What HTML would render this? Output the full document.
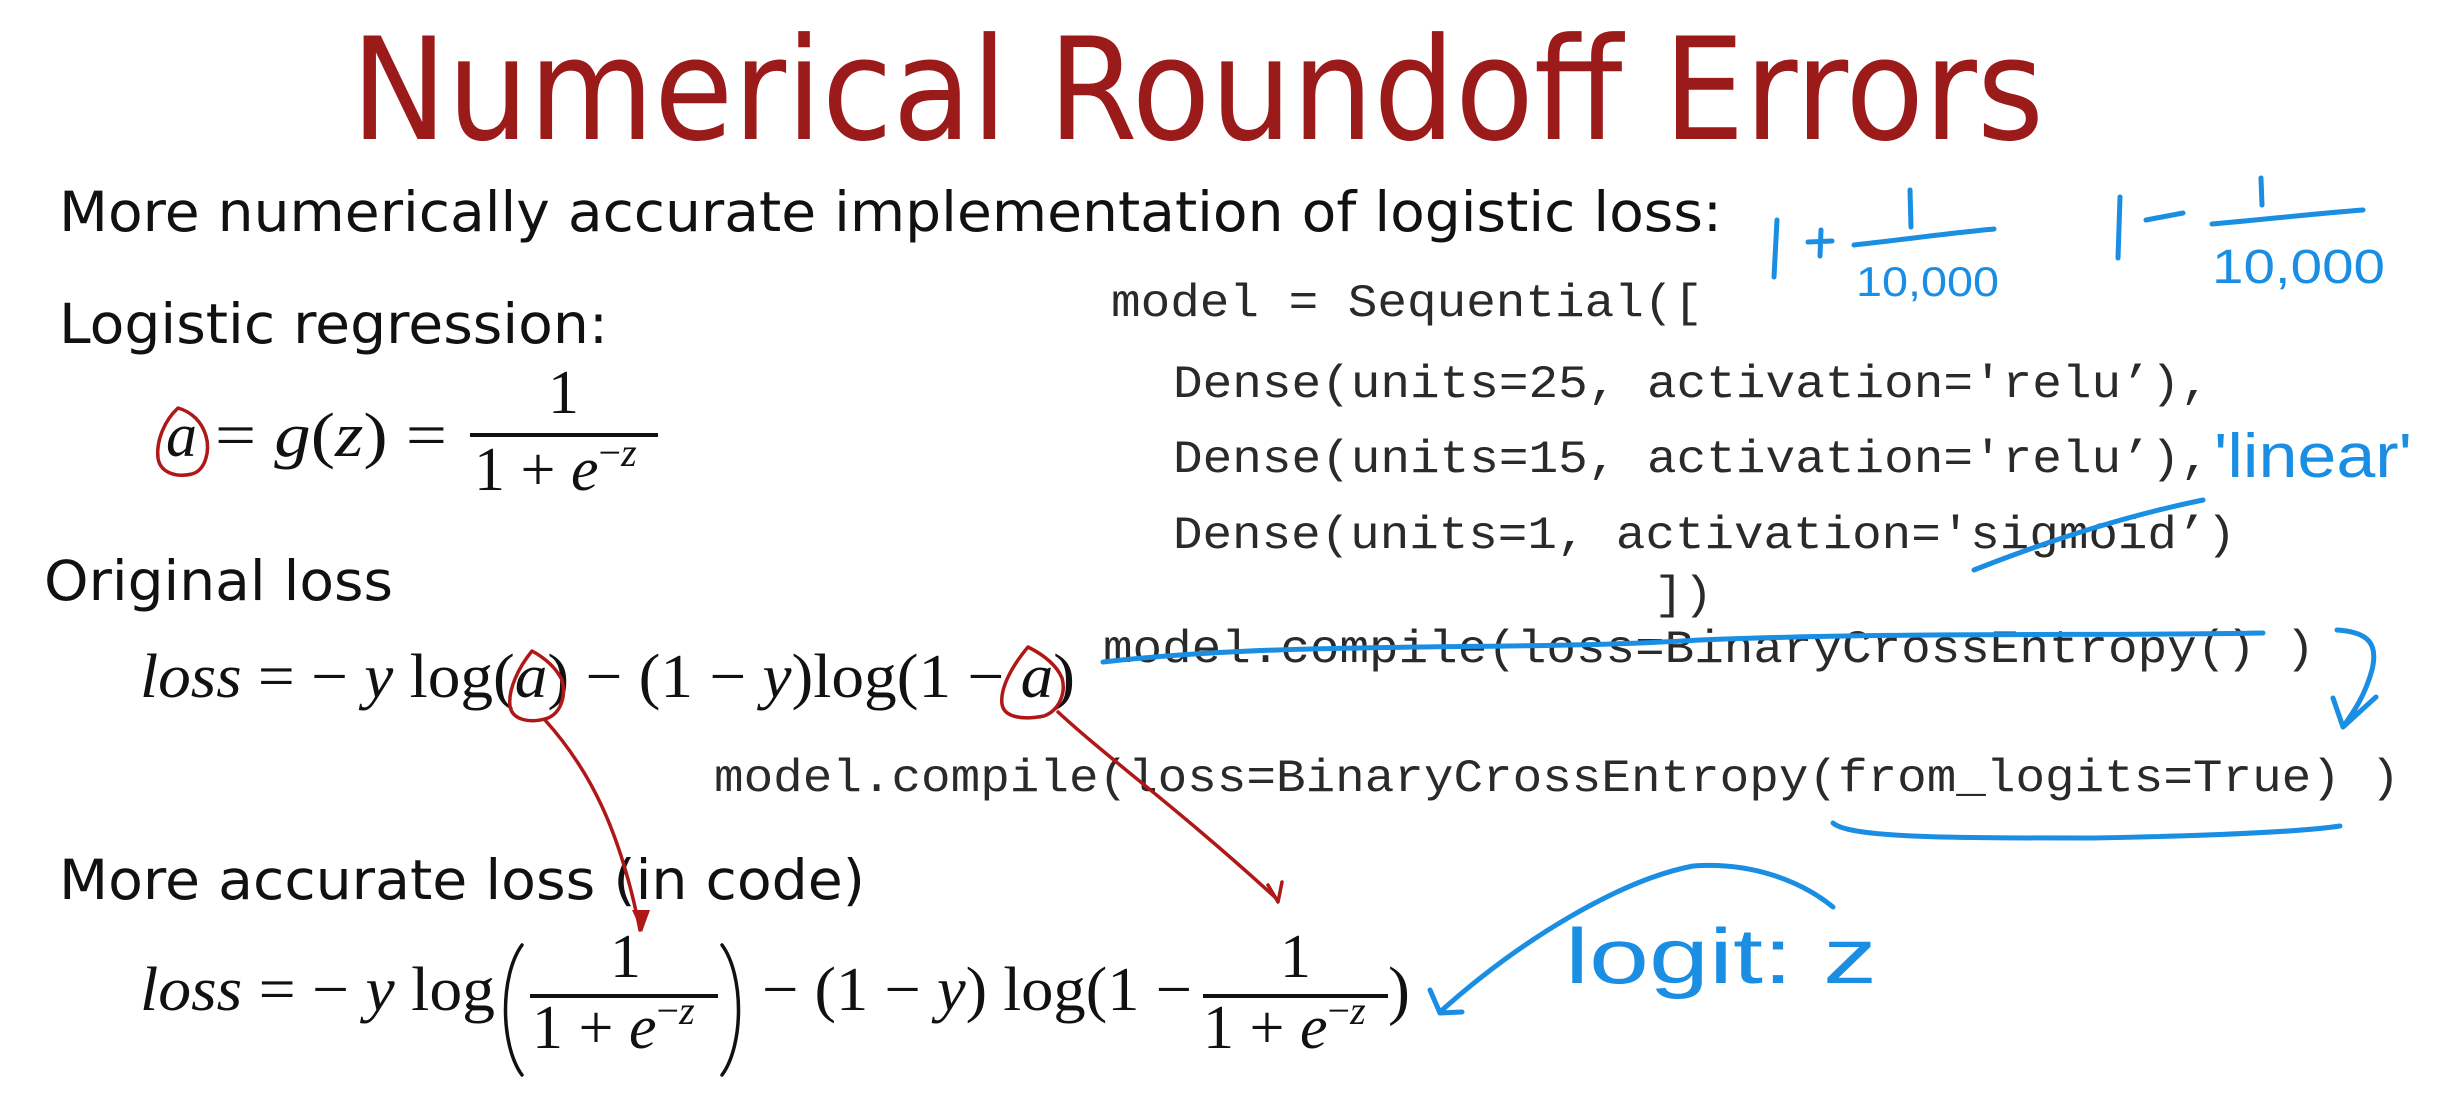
<!DOCTYPE html>
<html><head><meta charset="utf-8"><style>
html,body{margin:0;padding:0;background:#fff;}
svg{display:block;}
.s{font-family:"DejaVu Sans","Liberation Sans",sans-serif;fill:#111;}
.m{font-family:"Liberation Serif",serif;fill:#111;}
.c{font-family:"Liberation Mono",monospace;fill:#2a2a2a;}
.h{font-family:"Liberation Sans",sans-serif;fill:#1a8ee3;}
.b{fill:none;stroke:#1a8ee3;stroke-width:5;stroke-linecap:round;stroke-linejoin:round;}
.r{fill:none;stroke:#b01818;stroke-width:3.5;stroke-linecap:round;stroke-linejoin:round;}
.p{fill:none;stroke:#111;stroke-width:3.5;stroke-linecap:round;}
</style></head><body>
<svg width="2443" height="1120" viewBox="0 0 2443 1120" xmlns="http://www.w3.org/2000/svg">
<rect width="2443" height="1120" fill="#fff"/>
<text x="351" y="139" font-size="142" fill="#9b1a1a" font-family="DejaVu Sans, Liberation Sans, sans-serif" textLength="1693" lengthAdjust="spacingAndGlyphs">Numerical Roundoff Errors</text>

<text class="s" x="59" y="231" font-size="55" textLength="1663" lengthAdjust="spacingAndGlyphs">More numerically accurate implementation of logistic loss:</text>
<text class="s" x="59" y="343" font-size="55" textLength="549" lengthAdjust="spacingAndGlyphs">Logistic regression:</text>
<text class="s" x="44" y="600" font-size="55" textLength="349" lengthAdjust="spacingAndGlyphs">Original loss</text>
<text class="s" x="59" y="899" font-size="55" textLength="806" lengthAdjust="spacingAndGlyphs">More accurate loss (in code)</text>

<text class="m" x="166" y="456" font-size="62" font-style="italic">a</text>
<text class="m" x="215" y="456" font-size="62" textLength="232" lengthAdjust="spacingAndGlyphs">= <tspan font-style="italic">g</tspan>(<tspan font-style="italic">z</tspan>) =</text>
<text class="m" x="548" y="413" font-size="62">1</text>
<rect x="470" y="433" width="188" height="4" fill="#111"/>
<text class="m" x="474" y="490" font-size="62">1 + <tspan font-style="italic">e</tspan><tspan font-size="40" dy="-24">−<tspan font-style="italic">z</tspan></tspan></text>

<text class="m" x="140" y="697" font-size="62" textLength="935" lengthAdjust="spacingAndGlyphs"><tspan font-style="italic">loss</tspan> = − <tspan font-style="italic">y</tspan> log(<tspan font-style="italic">a</tspan>) − (1 − <tspan font-style="italic">y</tspan>)log(1 − <tspan font-style="italic">a</tspan>)</text>

<text class="m" x="140" y="1010" font-size="62" textLength="355" lengthAdjust="spacingAndGlyphs"><tspan font-style="italic">loss</tspan> = − <tspan font-style="italic">y</tspan> log</text>
<path class="p" d="M522 945 C500 975 500 1045 522 1075"/>
<text class="m" x="610" y="977" font-size="62">1</text>
<rect x="530" y="994" width="188" height="4" fill="#111"/>
<text class="m" x="532" y="1048" font-size="62">1 + <tspan font-style="italic">e</tspan><tspan font-size="40" dy="-24">−<tspan font-style="italic">z</tspan></tspan></text>
<path class="p" d="M722 945 C744 975 744 1045 722 1075"/>
<text class="m" x="762" y="1010" font-size="62" textLength="430" lengthAdjust="spacingAndGlyphs">− (1 − <tspan font-style="italic">y</tspan>) log(1 −</text>
<text class="m" x="1280" y="977" font-size="62">1</text>
<rect x="1203" y="994" width="185" height="4" fill="#111"/>
<text class="m" x="1203" y="1048" font-size="62">1 + <tspan font-style="italic">e</tspan><tspan font-size="40" dy="-24">−<tspan font-style="italic">z</tspan></tspan></text>
<text class="m" x="1388" y="1012" font-size="66">)</text>

<text class="c" x="1111" y="316" font-size="46" textLength="592" lengthAdjust="spacingAndGlyphs">model = Sequential([</text>
<text class="c" x="1173" y="397" font-size="46" textLength="1037" lengthAdjust="spacingAndGlyphs">Dense(units=25, activation='relu’),</text>
<text class="c" x="1173" y="472" font-size="46" textLength="1037" lengthAdjust="spacingAndGlyphs">Dense(units=15, activation='relu’),</text>
<text class="c" x="1173" y="548" font-size="46" textLength="1063" lengthAdjust="spacingAndGlyphs">Dense(units=1, activation='sigmoid’)</text>
<text class="c" x="1654" y="608" font-size="46" textLength="59" lengthAdjust="spacingAndGlyphs">])</text>
<text class="c" x="1103" y="662" font-size="46" textLength="1212" lengthAdjust="spacingAndGlyphs">model.compile(loss=BinaryCrossEntropy() )</text>
<text class="c" x="714" y="791" font-size="46" textLength="1686" lengthAdjust="spacingAndGlyphs">model.compile(loss=BinaryCrossEntropy(from_logits=True) )</text>

<path class="r" d="M178 408 C165 420 156 440 158 458 C160 472 175 478 192 474 C206 470 210 450 206 436 C202 422 192 412 178 408 Z"/>
<path class="r" d="M532 651 C518 668 508 690 510 706 C512 720 530 724 548 718 C562 712 566 694 562 680 C556 668 545 658 532 651 Z"/>
<path class="r" d="M1028 647 C1012 666 1000 688 1002 704 C1004 718 1024 720 1044 716 C1060 710 1066 692 1062 678 C1056 664 1042 654 1028 647 Z"/>
<path class="r" d="M545 720 C590 770 620 830 640 930"/>
<path d="M632 910 L642 932 L650 910 Z" fill="#b01818"/>
<path class="r" d="M1058 712 C1110 760 1180 810 1278 900"/>
<path class="r" d="M1268 885 L1278 902 L1282 882"/>

<path class="b" d="M1777 220 L1774 277"/>
<path class="b" d="M1808 242 L1832 241 M1821 230 L1820 256"/>
<path class="b" d="M1854 245 C1900 240 1950 233 1994 229"/>
<path class="b" d="M1910 190 L1911 227"/>
<text class="h" x="1856" y="296" font-size="42" textLength="143" lengthAdjust="spacingAndGlyphs">10,000</text>
<path class="b" d="M2120 197 L2118 258"/>
<path class="b" d="M2146 220 L2183 213"/>
<path class="b" d="M2212 224 C2260 220 2310 214 2363 210"/>
<path class="b" d="M2261 178 L2262 205"/>
<text class="h" x="2212" y="283" font-size="48" textLength="173" lengthAdjust="spacingAndGlyphs">10,000</text>
<text class="h" x="2214" y="477" font-size="62" textLength="198" lengthAdjust="spacingAndGlyphs">'linear'</text>
<path class="b" d="M1974 570 C2050 540 2130 515 2203 500"/>
<path class="b" d="M1103 662 C1300 640 1500 652 1700 640 C1900 632 2100 636 2263 633"/>
<path class="b" d="M2337 630 C2370 632 2378 645 2372 670 C2365 695 2355 710 2343 727 M2333 698 L2343 727 L2376 697"/>
<path class="b" d="M1833 823 C1850 838 1950 838 2093 838 C2200 836 2300 832 2340 826"/>
<path class="b" d="M1833 907 C1800 880 1750 862 1693 866 C1620 880 1520 940 1440 1012 M1430 990 L1440 1013 L1462 1012"/>
<text class="h" x="1565" y="983" font-size="78" textLength="312" lengthAdjust="spacingAndGlyphs">logit: z</text>
</svg>
</body></html>
